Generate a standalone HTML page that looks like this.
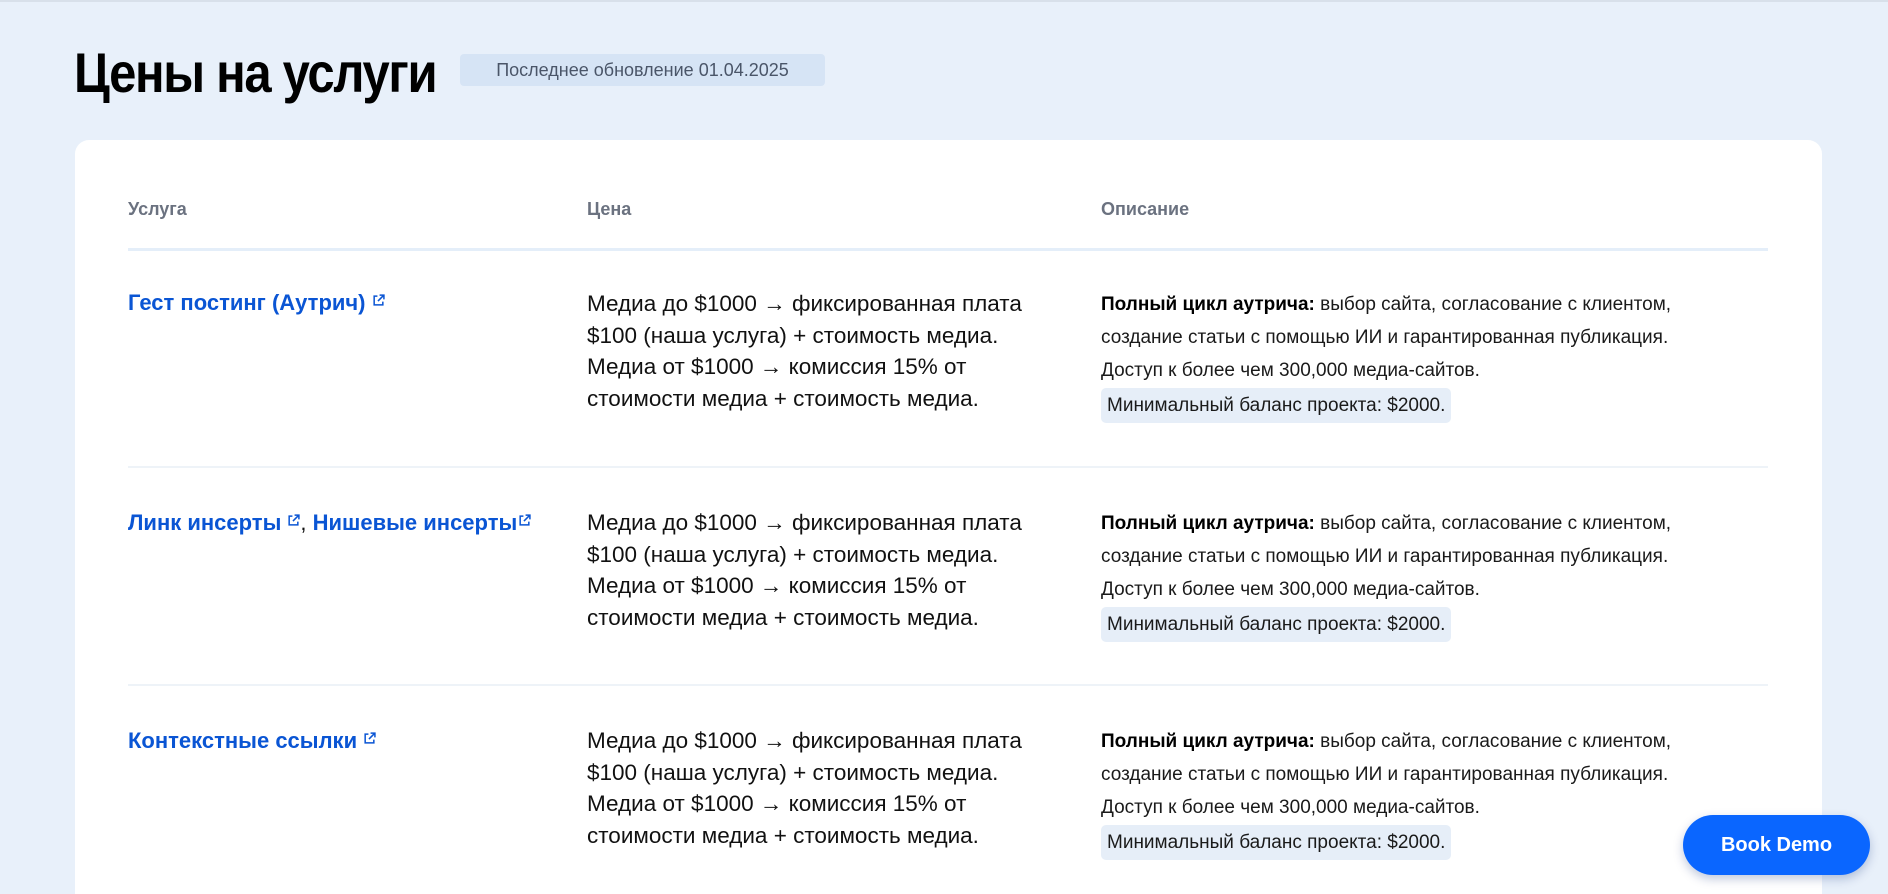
<!DOCTYPE html>
<html><head><meta charset="utf-8"><style>
*{margin:0;padding:0;box-sizing:border-box}
html,body{width:1888px;height:894px;overflow:hidden}
body{background:#e8f0fa;font-family:"Liberation Sans","DejaVu Sans",sans-serif;position:relative;border-top:2px solid #d8e0ea}
.title{position:absolute;left:74px;top:38px;font-size:56px;font-weight:700;color:#000;letter-spacing:-1.5px;transform:scaleX(0.875);transform-origin:left top;white-space:nowrap}
.badge{position:absolute;left:460px;top:52px;width:365px;height:32px;background:#d6e4f5;border-radius:4px;color:#4a5568;font-size:18px;line-height:32px;text-align:center}
.card{position:absolute;left:75px;top:138px;width:1747px;height:760px;background:#fff;border-radius:14px 14px 0 0}
.h{position:absolute;top:197px;font-size:18px;font-weight:700;color:#6b7280}
.hl{position:absolute;left:128px;width:1640px;top:246px;height:3px;background:#e4eef9}
.rl{position:absolute;left:128px;width:1640px;height:2px;background:#eef3f8}
.link{position:absolute;left:128px;font-size:22px;font-weight:700;color:#0a55d4;white-space:nowrap}
.link svg{width:13px;height:13px;vertical-align:3px;margin-left:6px}
.price{position:absolute;left:587px;font-size:22.5px;line-height:31.7px;color:#111;white-space:nowrap}
.desc{position:absolute;left:1101px;font-size:19px;line-height:33px;color:#1a1a1a;white-space:nowrap}
.desc b{color:#000}
.pill{display:inline-block;background:#e6eef8;border-radius:5px;padding:0 6px;line-height:35px;margin-top:1px}
.btn{position:absolute;left:1683px;top:813px;width:187px;height:60px;background:#0a66ff;border-radius:30px;color:#fff;font-weight:700;font-size:20px;text-align:center;line-height:60px;box-shadow:0 4px 10px rgba(0,40,120,.25)}
</style></head><body>
<div class="title">Цены на услуги</div>
<div class="badge">Последнее обновление 01.04.2025</div>
<div class="card"></div>
<div class="h" style="left:128px">Услуга</div>
<div class="h" style="left:587px">Цена</div>
<div class="h" style="left:1101px">Описание</div>
<div class="hl"></div>

<div class="link" style="top:288px">Гест постинг (Аутрич)<svg viewBox="0 0 12 12" fill="none" stroke="#0a55d4" stroke-width="1.4"><path d="M5 2H2v8h8V7M7 1h4v4M11 1L5.5 6.5"/></svg></div>
<div class="price" style="top:286px">Медиа до $1000 → фиксированная плата<br>$100 (наша услуга) + стоимость медиа.<br>Медиа от $1000 → комиссия 15% от<br>стоимости медиа + стоимость медиа.</div>
<div class="desc" style="top:286px"><b>Полный цикл аутрича:</b> выбор сайта, согласование с клиентом,<br>создание статьи с помощью ИИ и гарантированная публикация.<br>Доступ к более чем 300,000 медиа-сайтов.<br><span class="pill">Минимальный баланс проекта: $2000.</span></div>
<div class="rl" style="top:464px"></div>

<div class="link" style="top:508px">Линк инсерты<svg viewBox="0 0 12 12" fill="none" stroke="#0a55d4" stroke-width="1.4"><path d="M5 2H2v8h8V7M7 1h4v4M11 1L5.5 6.5"/></svg><span style="color:#111;font-weight:400">,</span> Нишевые инсерты<svg viewBox="0 0 12 12" fill="none" stroke="#0a55d4" stroke-width="1.4" style="margin-left:1px"><path d="M5 2H2v8h8V7M7 1h4v4M11 1L5.5 6.5"/></svg></div>
<div class="price" style="top:505px">Медиа до $1000 → фиксированная плата<br>$100 (наша услуга) + стоимость медиа.<br>Медиа от $1000 → комиссия 15% от<br>стоимости медиа + стоимость медиа.</div>
<div class="desc" style="top:505px"><b>Полный цикл аутрича:</b> выбор сайта, согласование с клиентом,<br>создание статьи с помощью ИИ и гарантированная публикация.<br>Доступ к более чем 300,000 медиа-сайтов.<br><span class="pill">Минимальный баланс проекта: $2000.</span></div>
<div class="rl" style="top:682px"></div>

<div class="link" style="top:726px">Контекстные ссылки<svg viewBox="0 0 12 12" fill="none" stroke="#0a55d4" stroke-width="1.4"><path d="M5 2H2v8h8V7M7 1h4v4M11 1L5.5 6.5"/></svg></div>
<div class="price" style="top:723px">Медиа до $1000 → фиксированная плата<br>$100 (наша услуга) + стоимость медиа.<br>Медиа от $1000 → комиссия 15% от<br>стоимости медиа + стоимость медиа.</div>
<div class="desc" style="top:723px"><b>Полный цикл аутрича:</b> выбор сайта, согласование с клиентом,<br>создание статьи с помощью ИИ и гарантированная публикация.<br>Доступ к более чем 300,000 медиа-сайтов.<br><span class="pill">Минимальный баланс проекта: $2000.</span></div>

<div class="btn">Book Demo</div>
</body></html>
